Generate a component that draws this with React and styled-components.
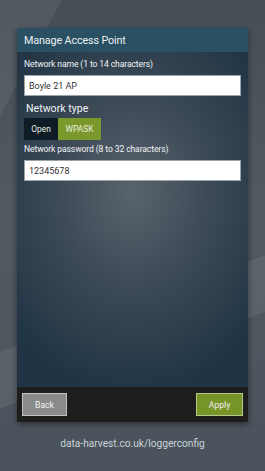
import * as React from 'react';
import styled, { createGlobalStyle } from 'styled-components';

const GlobalStyle = createGlobalStyle`
  html, body {
    margin: 0;
    padding: 0;
    height: 100%;
  }
  body {
    font-family: Roboto, "Liberation Sans", Arial, sans-serif;
  }
`

const Screen = styled.div`
  width: 265px;
  height: 471px;
  box-sizing: border-box;
  padding: 28px 17px 0 17px;
  display: flex;
  flex-direction: column;
  background:
    linear-gradient(160deg, rgba(255,255,255,0) 62%, rgba(255,255,255,.07) 62%, rgba(255,255,255,.07) 72%, rgba(255,255,255,0) 72%),
    linear-gradient(118deg, rgba(255,255,255,.06) 0, rgba(255,255,255,.06) 12%, rgba(255,255,255,0) 12%),
    linear-gradient(180deg, #474e55 0%, #525961 45%, #4a535c 100%);
  overflow: hidden;
`

const Card = styled.div`
  height: 394px;
  display: flex;
  flex-direction: column;
  box-shadow: 0 2px 6px rgba(0, 0, 0, .45);
`

const Header = styled.div`
  height: 24px;
  background: #2a5163;
  color: #e8eef2;
  font-size: 10.8px;
  letter-spacing: -.15px;
  display: flex;
  align-items: center;
  padding: 0 7px;
`

const Body = styled.div`
  flex: 1;
  padding: 6px 7px 0 7px;
  display: flex;
  flex-direction: column;
  background: radial-gradient(ellipse 70% 60% at 50% 42%, #59636d 0%, #3e4b57 45%, #203444 100%);
`

const Label = styled.div`
  color: #f0f3f5;
  font-size: 8.6px;
  letter-spacing: -.12px;
  line-height: 13px;
  margin: 0 0 4px 0;
`

const Heading = styled.div`
  color: #f0f3f5;
  font-size: 10.6px;
  line-height: 15px;
  margin: 5px 0 2px 2px;
`

const Field = styled.div`
  height: 21px;
  background: #fff;
  border: 1px solid #9aa4ab;
  box-sizing: border-box;
  color: #333;
  font-size: 9px;
  display: flex;
  align-items: center;
  padding: 0 4px;
`

const Toggle = styled.div`
  display: flex;
  height: 22px;
  margin-bottom: 3px;
`

const ToggleButton = styled.div`
  background: ${p => (p.$active ? '#7a982b' : '#0f1c26')};
  color: #e8eee0;
  font-size: 8.4px;
  display: flex;
  align-items: center;
  justify-content: center;
  width: ${p => p.$w}px;
`

const Footer = styled.div`
  height: 35px;
  background: #1e1e1d;
  display: flex;
  align-items: center;
  justify-content: space-between;
  padding: 0 5px;
`

const Button = styled.div`
  height: 23px;
  box-sizing: border-box;
  border: 1px solid ${p => (p.$primary ? '#b9c98a' : '#c2c2c2')};
  background: ${p => (p.$primary ? '#779426' : '#898b8b')};
  color: #f0f0f0;
  font-size: 8.6px;
  display: flex;
  align-items: center;
  justify-content: center;
  width: ${p => p.$w}px;
`

const Link = styled.div`
  text-align: center;
  color: #c9d2da;
  font-size: 10.2px;
  margin-top: 16px;
`

export default function App() {
  return (
    <Screen>
      <GlobalStyle />
      <Card>
        <Header>Manage Access Point</Header>
        <Body>
          <Label>Network name (1 to 14 characters)</Label>
          <Field>Boyle 21 AP</Field>
          <Heading>Network type</Heading>
          <Toggle>
            <ToggleButton $w={34}>Open</ToggleButton>
            <ToggleButton $w={43} $active>WPASK</ToggleButton>
          </Toggle>
          <Label>Network password (8 to 32 characters)</Label>
          <Field>12345678</Field>
        </Body>
        <Footer>
          <Button $w={45}>Back</Button>
          <Button $w={47} $primary>Apply</Button>
        </Footer>
      </Card>
      <Link>data-harvest.co.uk/loggerconfig</Link>
    </Screen>
  );
}
